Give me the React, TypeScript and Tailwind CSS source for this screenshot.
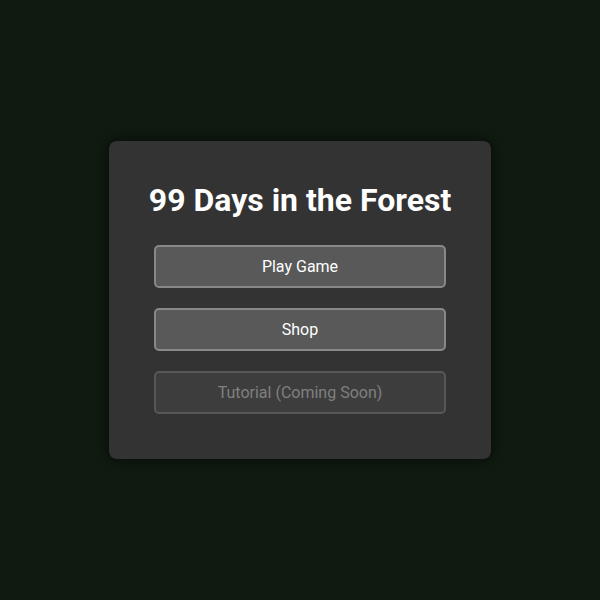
import React from 'react';

const MainMenu: React.FC = () => {
  const buttons = [
    { label: 'Play Game', disabled: false },
    { label: 'Shop', disabled: false },
    { label: 'Tutorial (Coming Soon)', disabled: true },
  ];

  return (
    <div className="w-[382px] rounded-lg bg-[#333333] px-[45px] pt-[40px] pb-[45px] shadow-[0_0_12px_rgba(0,0,0,0.6)]">
      <h1 className="-mx-[20px] whitespace-nowrap text-center text-[32px] leading-[38px] font-bold text-white">99 Days in the Forest</h1>
      <div className="mt-[26px] flex flex-col gap-[20px]">
        {buttons.map(b => (
          <button
            key={b.label}
            disabled={b.disabled}
            className={`h-[43px] w-full rounded-[5px] border-2 text-[16px] ${
              b.disabled
                ? 'border-[#575757] bg-[#3d3d3d] text-[#808080]'
                : 'border-[#888888] bg-[#595959] text-white'
            }`}
          >
            {b.label}
          </button>
        ))}
      </div>
    </div>
  );
};

export default function App() {
  return (
    <div className="flex h-[600px] w-[600px] items-center justify-center bg-[#0f1a10]" style={{ fontFamily: 'Roboto, sans-serif' }}>
      <MainMenu />
    </div>
  );
}
